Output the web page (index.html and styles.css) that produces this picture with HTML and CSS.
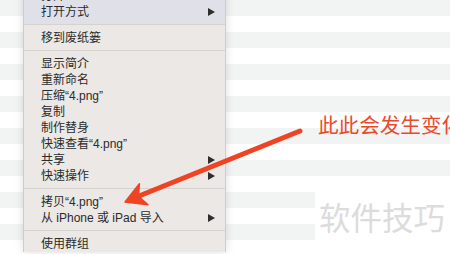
FILE: index.html
```html
<!DOCTYPE html>
<html lang="zh-CN">
<head>
<meta charset="utf-8">
<link rel="stylesheet" href="styles.css">
</head>
<body>
<div class="stage">
  <div class="menu">
    <div class="group group-top">
      <div class="item">打开</div>
      <div class="item">打开方式<span class="sub"></span></div>
    </div>
    <div class="sep"></div>
    <div class="item">移到废纸篓</div>
    <div class="sep"></div>
    <div class="item">显示简介</div>
    <div class="item">重新命名</div>
    <div class="item">压缩“4.png”</div>
    <div class="item">复制</div>
    <div class="item">制作替身</div>
    <div class="item">快速查看“4.png”</div>
    <div class="item">共享<span class="sub"></span></div>
    <div class="item">快速操作<span class="sub"></span></div>
    <div class="sep"></div>
    <div class="item">拷贝“4.png”</div>
    <div class="item">从 iPhone 或 iPad 导入<span class="sub"></span></div>
    <div class="sep"></div>
    <div class="item">使用群组</div>
  </div>
  <div class="note">此此会发生变化</div>
  <div class="mark">软件技巧</div>
  <svg class="arrow" width="450" height="254" viewBox="0 0 450 254">
    <line x1="300" y1="131" x2="139" y2="196" stroke="#ef4424" stroke-width="5" stroke-linecap="round"/>
    <polygon points="125,202 139.4,183.8 138.5,196.4 148,204.8" fill="#ef4424" stroke="#ef4424" stroke-width="1.5" stroke-linejoin="round"/>
  </svg>
</div>
</body>
</html>
```
FILE: styles.css
```css
html, body {
  margin: 0;
  padding: 0;
}
body {
  width: 450px;
  height: 254px;
  overflow: hidden;
  font-family: "Liberation Sans", "Noto Sans CJK SC", sans-serif;
}
.stage {
  position: relative;
  width: 450px;
  height: 254px;
  overflow: hidden;
  background: repeating-linear-gradient(to bottom, #f2f3f3 0 16px, #ffffff 16px 32px);
}
.menu {
  margin-left: 23px;
  margin-top: -12px;
  width: 203px;
  box-sizing: border-box;
  background: #ebe8e5;
  border-left: 1px solid #cfcdcb;
  border-right: 1px solid #cfcdcb;
  box-shadow: 0 0 9px rgba(0, 0, 0, 0.13);
  display: flex;
  flex-direction: column;
}
.group-top {
  background: #dfe0e8;
  padding-bottom: 4px;
  margin-bottom: -4px;
}
.item {
  height: 16px;
  line-height: 16px;
  font-size: 12px;
  color: #2b2b2b;
  padding: 0 11px 0 17px;
  display: flex;
  align-items: center;
  justify-content: space-between;
  white-space: nowrap;
}
.sub {
  width: 0;
  height: 0;
  border-left: 7px solid #2e2e2e;
  border-top: 4px solid transparent;
  border-bottom: 4px solid transparent;
  margin-right: -1px;
}
.sep {
  height: 1px;
  background: #d5d2cf;
  margin: 4px 0 5px;
}
.note {
  position: absolute;
  left: 318px;
  top: 111px;
  font-family: "Noto Sans CJK SC", sans-serif;
  font-size: 20.6px;
  line-height: 27px;
  color: #e84a2c;
  white-space: nowrap;
}
.mark {
  position: absolute;
  left: 315px;
  top: 192px;
  width: 140px;
  height: 48px;
  background: #ffffff;
  font-family: "Noto Sans CJK SC", sans-serif;
  font-size: 31.5px;
  line-height: 48px;
  color: #dcdcdc;
  padding-left: 4px;
  box-sizing: border-box;
  white-space: nowrap;
}
.arrow {
  position: absolute;
  left: 0;
  top: 0;
}
```
